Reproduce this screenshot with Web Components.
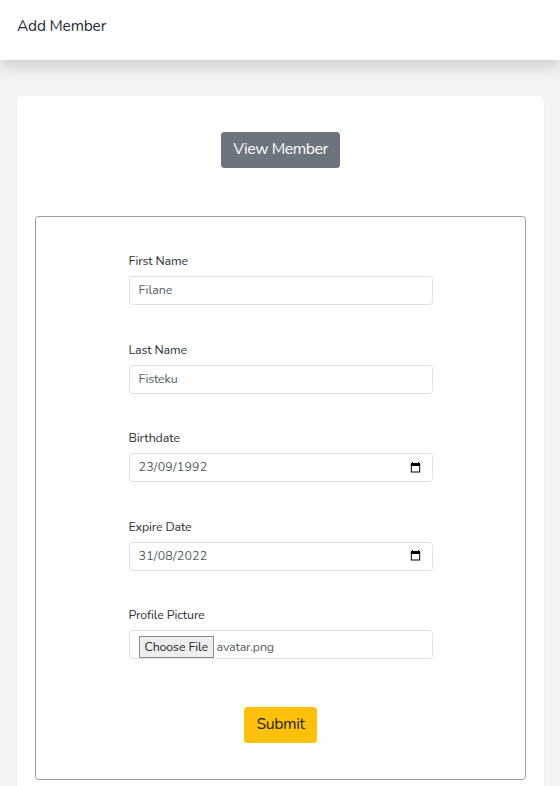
<!DOCTYPE html>
<html lang="en">
<head>
<meta charset="utf-8">
<title>Add Member</title>
<style>
html,body{margin:0;height:100%;overflow:hidden}
body{background:#f2f3f5;font-family:Nunito,Lato,"Open Sans",sans-serif;color:#212529}
</style>
</head>
<body>
<member-page></member-page>
<script>
const define = (name, html, setup) => customElements.define(name, class extends HTMLElement {
  connectedCallback() {
    if (this.shadowRoot) return;
    const t = document.createElement('template');
    t.innerHTML = html;
    this.attachShadow({mode: 'open'}).append(t.content.cloneNode(true));
    if (setup) setup(this, this.shadowRoot);
  }
});

// Text whose letter spacing is adjusted to give a fixed measure.
define('fit-text', `<style>:host{display:block;white-space:nowrap}span{display:inline-block}</style><span><slot></slot></span>`, (host, root) => {
  const span = root.querySelector('span');
  const want = Number(host.getAttribute('measure'));
  const n = host.textContent.length;
  host.style.width = want + 'px';
  host.style.letterSpacing = (want - span.getBoundingClientRect().width) / n + 'px';
});

define('page-header', `<style>
:host{display:block;box-sizing:border-box;height:59.5px;padding:15px 17px 0;background:#fff;box-shadow:0 7px 14px rgba(0,0,0,.15);font-size:15.5px;line-height:22px;color:#1f2937;position:relative}
</style><slot></slot>`);

define('action-button', `<style>
:host{display:block;box-sizing:border-box;width:fit-content;height:36px;margin:0 auto;padding:6.5px 12.5px;border-radius:3.5px;font-size:15.8px;line-height:22px;background:#6c757d;color:#fff}
:host([kind=warning]){background:#ffc107;color:#212529;margin-top:12px;padding-top:5.8px}
</style><slot></slot>`);

define('form-field', `<style>
:host{display:flow-root;height:88.5px;font-size:12.4px}
.label{box-sizing:border-box;line-height:17px;margin-top:-.3px;height:23.8px;color:#2b3035}
.box{box-sizing:border-box;height:29px;border:1px solid #dee2e6;border-radius:3.5px;padding:0 11px .5px 9px;display:flex;align-items:center;justify-content:space-between;line-height:18px;color:#545b62;overflow:hidden}
</style><div class="label"><slot name="label"></slot></div><div class="box"><slot></slot></div>`);

define('calendar-icon', `<style>:host{display:block;width:11px;height:11px}svg{display:block}</style>
<svg width="11" height="11" viewBox="0 0 11 11"><path d="M2 0h1v1h5V0h1v1h1.2v9.6H.8V1H2zM1.8 4v5.6h7.4V4z" fill="#000" fill-rule="evenodd"/></svg>`);

define('file-choice', `<style>
:host{display:flex;align-items:center;gap:3px;padding-top:5.5px}
.pick{box-sizing:border-box;width:75px;height:22px;padding:1px 5px;border:1px solid #8b8b8b;background:#efefef;color:#212529;line-height:18px}
</style><div class="pick"><slot name="button"></slot></div><slot></slot>`);

define('member-page', `<style>
:host{display:block;height:786px;overflow:hidden}
main{padding:36px 16px 0 17px}
.card{box-sizing:border-box;height:730px;background:#fff;border-radius:6px;padding:36px 18px 0 18px;box-shadow:0 1px 3px rgba(0,0,0,.04)}
form{box-sizing:border-box;height:564px;margin:48px 0 0;border:1px solid #9a9b9e;border-radius:3.5px;padding:36px 92.4px 0 92.5px}
</style>
<page-header><fit-text measure="89">Add Member</fit-text></page-header>
<main><section class="card">
<action-button><fit-text measure="94.5">View Member</fit-text></action-button>
<form>
<form-field><fit-text slot="label" measure="59.5">First Name</fit-text><fit-text measure="34">Filane</fit-text></form-field>
<form-field><fit-text slot="label" measure="58.5">Last Name</fit-text><fit-text measure="39">Fisteku</fit-text></form-field>
<form-field><fit-text slot="label" measure="51.5">Birthdate</fit-text><fit-text measure="69">23/09/1992</fit-text><calendar-icon></calendar-icon></form-field>
<form-field><fit-text slot="label" measure="63">Expire Date</fit-text><fit-text measure="69">31/08/2022</fit-text><calendar-icon></calendar-icon></form-field>
<form-field><fit-text slot="label" measure="76">Profile Picture</fit-text><file-choice><fit-text slot="button" measure="63.5">Choose File</fit-text><fit-text measure="57.5">avatar.png</fit-text></file-choice></form-field>
<action-button kind="warning"><fit-text measure="48">Submit</fit-text></action-button>
</form>
</section></main>`);
</script>
</body>
</html>
